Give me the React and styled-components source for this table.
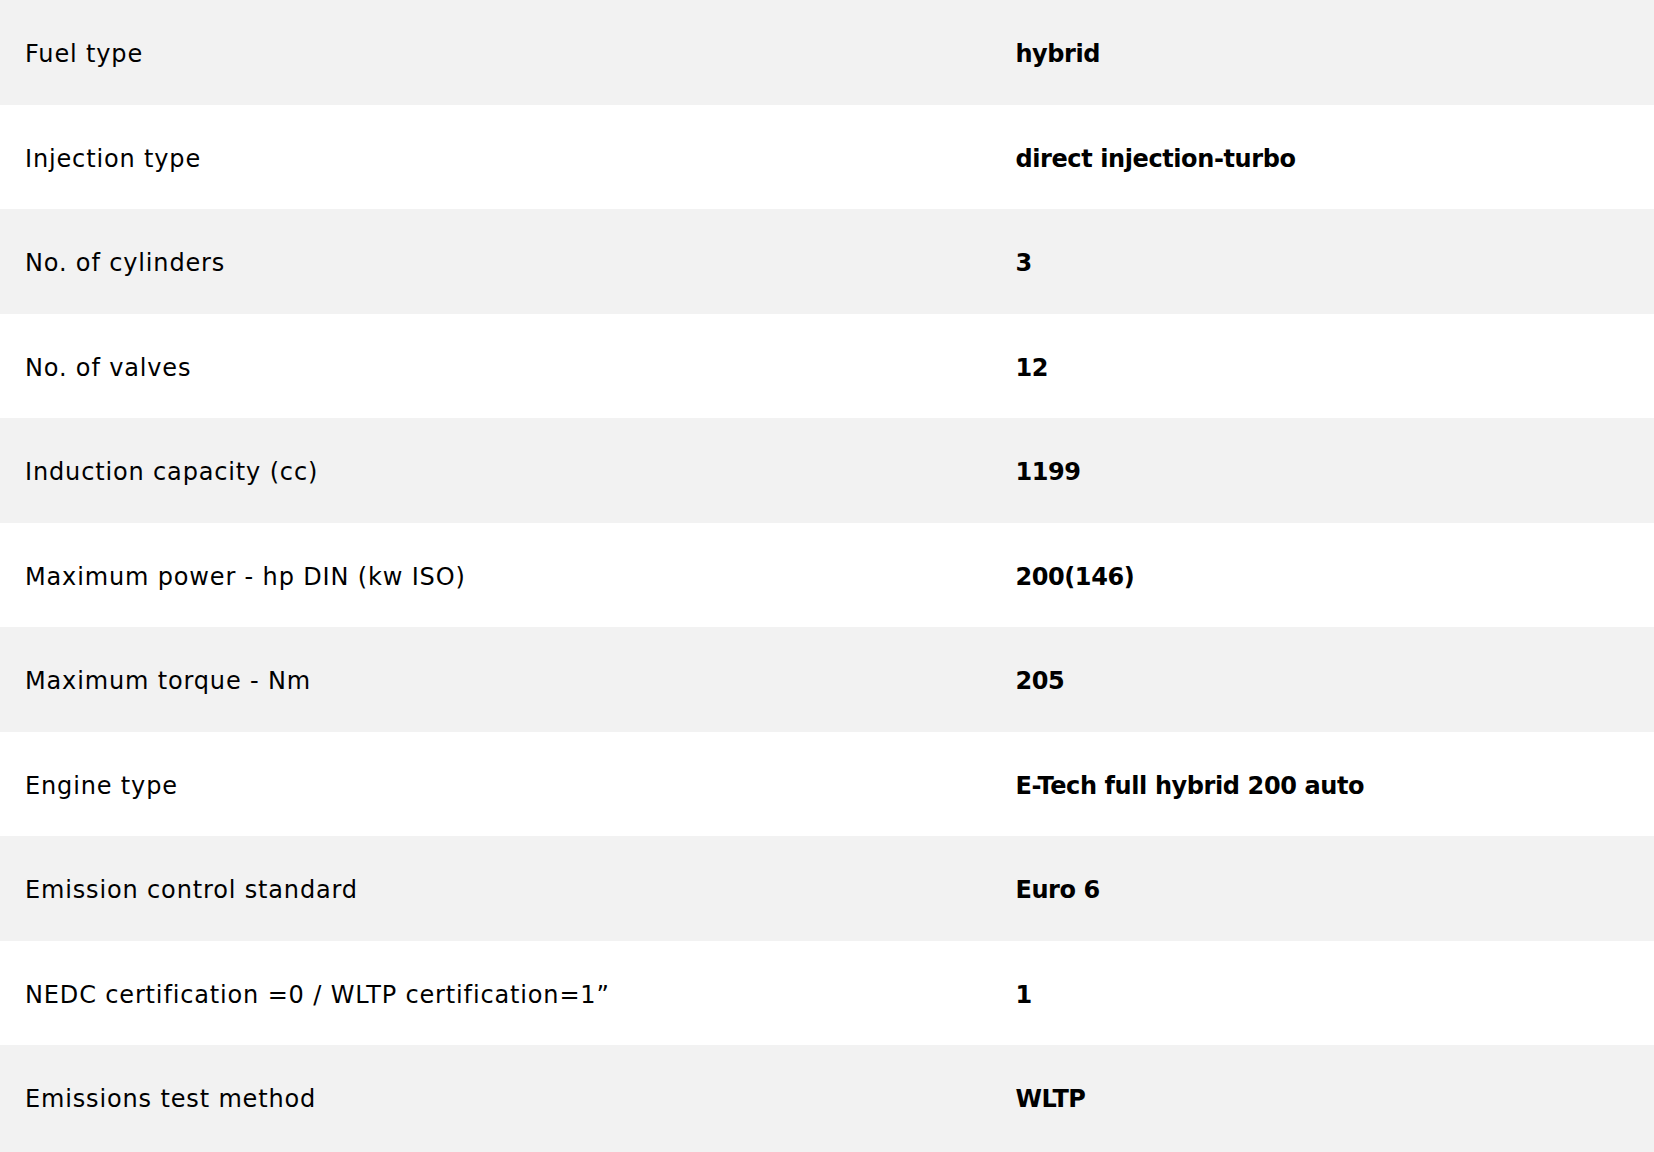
import React from "react";
import styled, { createGlobalStyle } from "styled-components";

const GlobalStyle = createGlobalStyle`
    body {
        margin: 0;
        background-color: #f2f2f2;
        font-family: "DejaVu Sans", "Noto Sans", sans-serif;
        color: #000;
    }
`

const StyledTable = styled.div`
    display: flex;
    flex-direction: column;
    width: 100%;
    min-height: 1152px;
    background-color: #f2f2f2;
`

const StyledRow = styled.div`
    display: grid;
    grid-template-columns: 60% 40%;
    align-items: center;
    height: 104.5px;
    background-color: ${(props) => (props.striped ? "#f2f2f2" : "#ffffff")};
`

const StyledLabel = styled.div`
    padding-left: 25px;
    font-size: 24px;
    font-weight: 400;
    letter-spacing: 0.85px;
    padding-top: 4px;
`

const StyledValue = styled.div`
    padding-left: 23px;
    font-size: 24px;
    font-weight: 700;
    letter-spacing: -0.4px;
    padding-top: 4px;
`

const specs = [
    ["Fuel type", "hybrid"],
    ["Injection type", "direct injection-turbo"],
    ["No. of cylinders", "3"],
    ["No. of valves", "12"],
    ["Induction capacity (cc)", "1199"],
    ["Maximum power - hp DIN (kw ISO)", "200(146)"],
    ["Maximum torque - Nm", "205"],
    ["Engine type", "E-Tech full hybrid 200 auto"],
    ["Emission control standard", "Euro 6"],
    ["NEDC certification =0 / WLTP certification=1\u201d", "1"],
    ["Emissions test method", "WLTP"],
]

const App = () => {
    return (
        <>
            <GlobalStyle />
            <StyledTable>
                {specs.map(([label, value], index) => (
                    <StyledRow key={index} striped={index % 2 === 0}>
                        <StyledLabel>{label}</StyledLabel>
                        <StyledValue>{value}</StyledValue>
                    </StyledRow>
                ))}
            </StyledTable>
        </>
    )
}

export default App;
